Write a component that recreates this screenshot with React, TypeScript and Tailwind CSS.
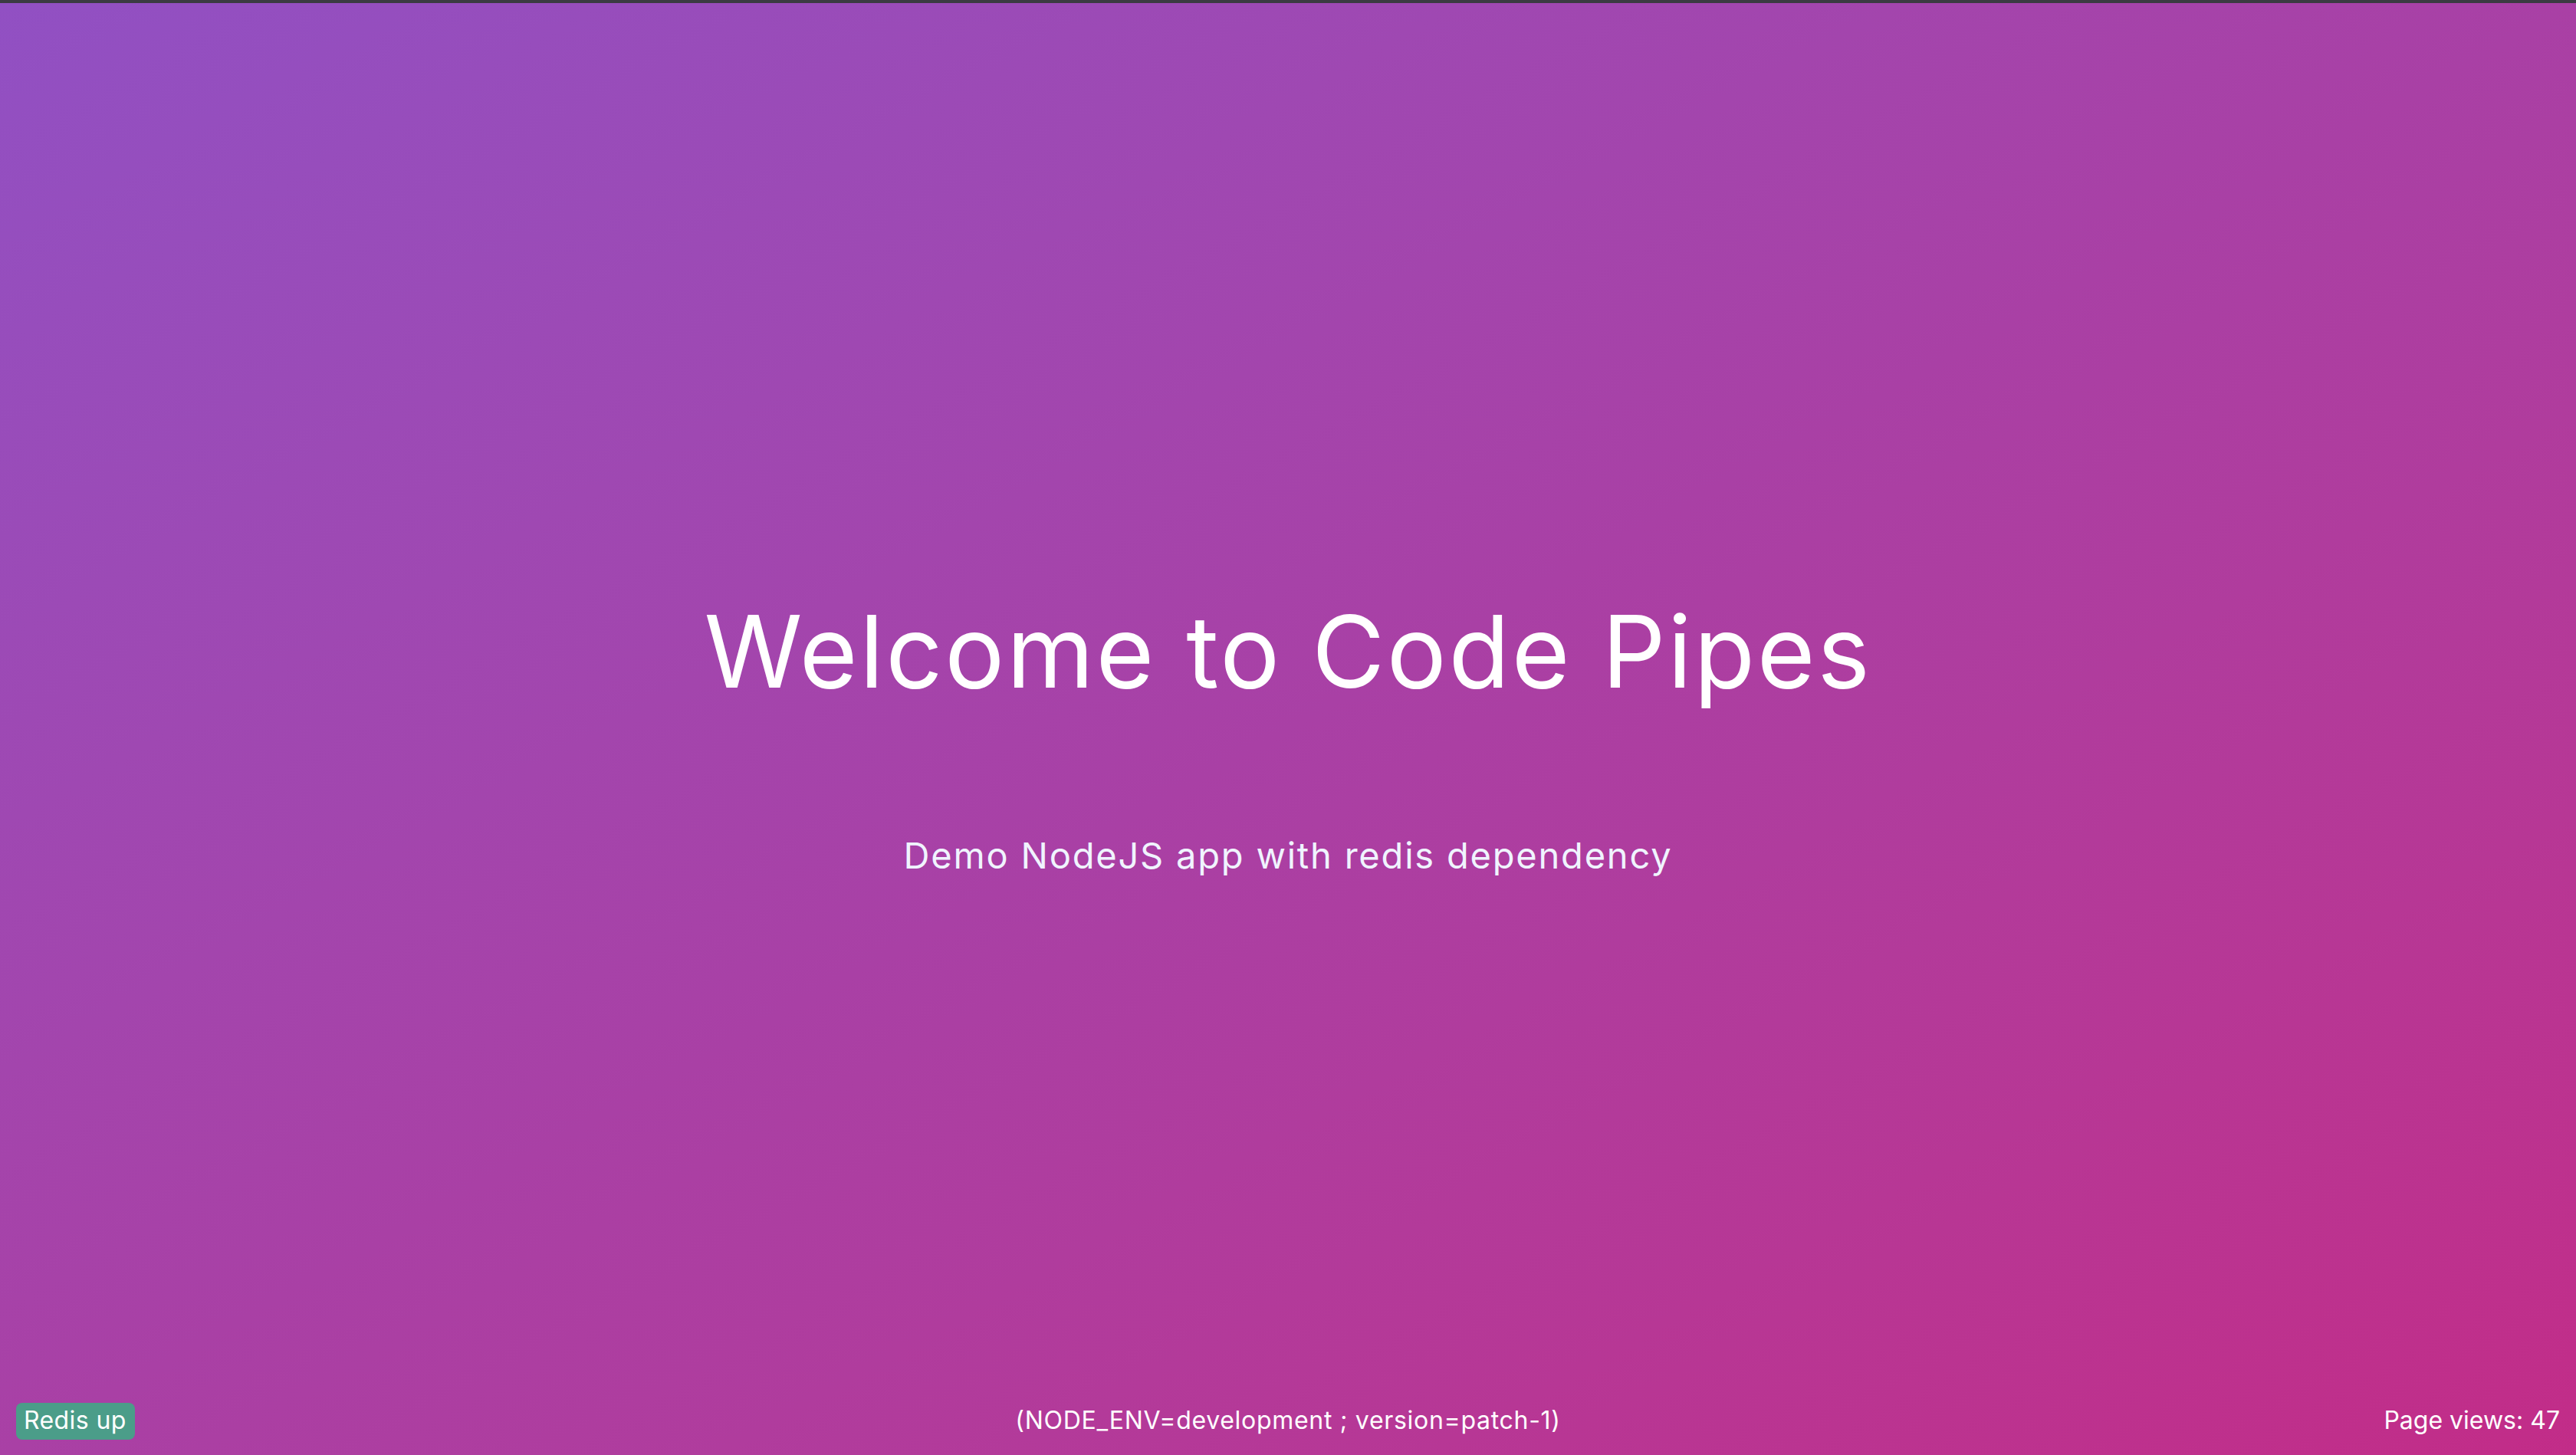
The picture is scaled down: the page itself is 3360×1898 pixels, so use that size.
import React from 'react';

export default function App() {
  const views = 47;

  return (
    <div className="w-full h-[1898px] flex flex-col font-['Inter',sans-serif] text-white overflow-hidden">
      {/* thin dark strip on top */}
      <div className="h-[4px] bg-[#3b3b42]" />

      <main className="flex-1 flex flex-col bg-linear-to-br from-[#9150c3] via-[#a940a5] to-[#c22c88]">
        {/* Hero */}
        <div className="pt-[781px] flex flex-col items-center">
          <h1 className="text-[130px] leading-none font-normal tracking-[2.7px]">Welcome to Code Pipes</h1>
          <p className="mt-[177px] text-[47px] leading-none tracking-[1.8px] text-[#f0f4ff]">
            Demo NodeJS app with redis dependency
          </p>
        </div>

        <div className="flex-1" />

        {/* Footer */}
        <footer className="grid grid-cols-3 items-start px-[21px] pb-[20px] text-[32px] leading-none">
          <span className="justify-self-start bg-[#4b9d89] rounded-[8px] pl-[10px] pr-[11px] pt-[7px] pb-[9px] tracking-[0.4px]">
            Redis up
          </span>
          <span className="justify-self-center mt-[7px] whitespace-nowrap tracking-[0.7px]">
            (NODE_ENV=development ; version=patch-1)
          </span>
          <span className="justify-self-end mt-[7px]">Page views: {views}</span>
        </footer>
      </main>
    </div>
  );
}
